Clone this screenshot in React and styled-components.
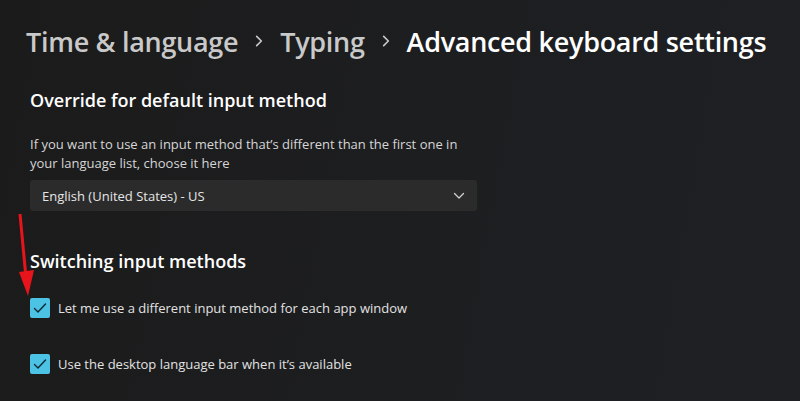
import React from 'react'
import styled, { createGlobalStyle } from 'styled-components'

const GlobalStyle = createGlobalStyle`
  html, body {
    margin: 0;
    padding: 0;
    background: #1c1c1c;
  }
  * {
    box-sizing: border-box;
  }
`

function Chevron({ size = 12, color = '#d0d0d0' }) {
  return (
    <svg width={size} height={size} viewBox="0 0 12 12" fill="none">
      <path d="M4 2 L8 6 L4 10" stroke={color} strokeWidth="1.4" strokeLinecap="round" strokeLinejoin="round" />
    </svg>
  )
}

function CheckBox() {
  return (
    <Box>
      <svg width="14" height="12" viewBox="0 0 14 12" fill="none">
        <path d="M1.5 6.5 L5 10 L12.5 2" stroke="#0c2a33" strokeWidth="1.4" strokeLinecap="round" strokeLinejoin="round" />
      </svg>
    </Box>
  )
}

function App() {
  return (
    <Page>
      <GlobalStyle />
      <Breadcrumb>
        <Crumb>Time &amp; language</Crumb>
        <Sep><Chevron size={14} color="#c9c9c9" /></Sep>
        <Crumb>Typing</Crumb>
        <Sep><Chevron size={14} color="#c9c9c9" /></Sep>
        <Crumb current>Advanced keyboard settings</Crumb>
      </Breadcrumb>

      <Content>
        <Section>
          <Heading>Override for default input method</Heading>
          <Description>
            If you want to use an input method that’s different than the first one in
            your language list, choose it here
          </Description>
          <Select>
            <span>English (United States) - US</span>
            <svg width="12" height="8" viewBox="0 0 12 8" fill="none">
              <path d="M1.5 1.5 L6 6 L10.5 1.5" stroke="#cfcfcf" strokeWidth="1.3" strokeLinecap="round" strokeLinejoin="round" />
            </svg>
          </Select>
        </Section>

        <Section>
          <Heading>Switching input methods</Heading>
          <CheckList>
            <CheckRow>
              <CheckBox />
              <Label>Let me use a different input method for each app window</Label>
              <Arrow width="20" height="90" viewBox="0 0 20 90">
                <path d="M2 0 L8 64" stroke="#e8141c" strokeWidth="3" />
                <polygon points="1,58 16,56 10,82" fill="#e8141c" />
              </Arrow>
            </CheckRow>
            <CheckRow>
              <CheckBox />
              <Label>Use the desktop language bar when it’s available</Label>
            </CheckRow>
          </CheckList>
        </Section>
      </Content>
    </Page>
  )
}

export default App

const Page = styled.div`
  width: 800px;
  height: 401px;
  overflow: hidden;
  background: linear-gradient(100deg, #1b1b1b 0%, #1d1e20 55%, #1f2024 100%);
  font-family: "Open Sans", "Noto Sans", sans-serif;
  color: #ffffff;
  padding: 21px 0 0 26px;
`

const Breadcrumb = styled.div`
  display: flex;
  align-items: center;
  height: 40px;
  white-space: nowrap;
`

const Crumb = styled.span`
  font-size: 27px;
  font-weight: 600;
  color: ${props => props.current ? '#ffffff' : '#c9c9c9'};
  letter-spacing: -0.3px;
`

const Sep = styled.span`
  display: flex;
  align-items: center;
  margin: 0 14px 0 14px;
`

const Content = styled.div`
  padding-left: 4px;
  margin-top: 27px;
  display: flex;
  flex-direction: column;
  gap: 38px;
`

const Section = styled.div`
  display: flex;
  flex-direction: column;
`

const Heading = styled.h2`
  margin: 0;
  font-size: 18px;
  font-weight: 600;
  color: #ffffff;
  line-height: 24px;
`

const Description = styled.p`
  margin: 23px 0 7px;
  width: 440px;
  font-size: 13px;
  line-height: 19px;
  color: #d6d6d6;
`

const Select = styled.div`
  width: 447px;
  height: 31px;
  background: #2b2b2b;
  border-radius: 3px;
  display: flex;
  align-items: center;
  justify-content: space-between;
  padding: 0 12px;
  font-size: 13px;
  color: #e6e6e6;
`

const CheckList = styled.div`
  display: flex;
  flex-direction: column;
  gap: 36px;
  margin-top: 25px;
`

const CheckRow = styled.div`
  position: relative;
  display: flex;
  align-items: center;
  gap: 8px;
`

const Box = styled.div`
  width: 20px;
  height: 20px;
  background: #4cc2e4;
  border-radius: 2px;
  display: flex;
  align-items: center;
  justify-content: center;
`

const Label = styled.span`
  font-size: 13px;
  color: #e2e2e2;
`

const Arrow = styled.svg`
  position: absolute;
  left: -12px;
  top: -84px;
`
